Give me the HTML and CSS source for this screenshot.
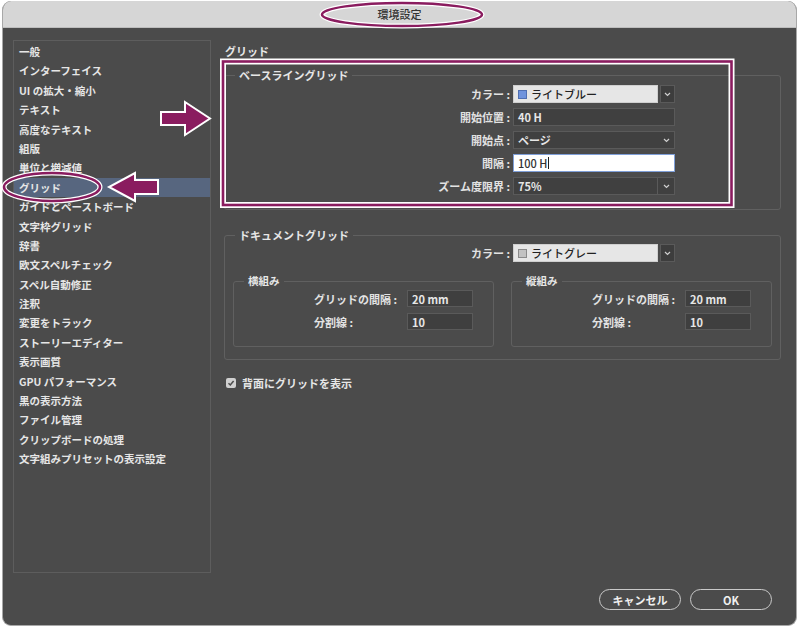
FILE: index.html
```html
<!DOCTYPE html>
<html lang="ja">
<head>
<meta charset="utf-8">
<title>環境設定</title>
<link rel="stylesheet" href="styles.css">
</head>
<body>
<div class="window">
  <div class="titlebar">環境設定</div>
  <div class="body">
    <div class="main-row">
      <nav class="sidebar">
        <div class="item">一般</div>
        <div class="item">インターフェイス</div>
        <div class="item">UI の拡大・縮小</div>
        <div class="item">テキスト</div>
        <div class="item">高度なテキスト</div>
        <div class="item">組版</div>
        <div class="item">単位と増減値</div>
        <div class="item selected">グリッド</div>
        <div class="item">ガイドとペーストボード</div>
        <div class="item">文字枠グリッド</div>
        <div class="item">辞書</div>
        <div class="item">欧文スペルチェック</div>
        <div class="item">スペル自動修正</div>
        <div class="item">注釈</div>
        <div class="item">変更をトラック</div>
        <div class="item">ストーリーエディター</div>
        <div class="item">表示画質</div>
        <div class="item">GPU パフォーマンス</div>
        <div class="item">黒の表示方法</div>
        <div class="item">ファイル管理</div>
        <div class="item">クリップボードの処理</div>
        <div class="item">文字組みプリセットの表示設定</div>
      </nav>
      <section class="content">
        <h2 class="heading">グリッド</h2>
        <fieldset class="group baseline">
          <legend>ベースライングリッド</legend>
          <div class="form">
            <div class="label">カラー :</div>
            <div class="combo">
              <div class="combo-main light"><span class="swatch blue"></span>ライトブルー</div>
              <div class="combo-btn"><svg width="7" height="5" viewBox="0 0 7 5"><path d="M1 1l2.5 2.5L6 1" fill="none" stroke="#cfcfcf" stroke-width="1.2"/></svg></div>
            </div>
            <div class="label">開始位置 :</div>
            <div class="field">40 H</div>
            <div class="label">開始点 :</div>
            <div class="field select">ページ<svg width="7" height="5" viewBox="0 0 7 5"><path d="M1 1l2.5 2.5L6 1" fill="none" stroke="#cfcfcf" stroke-width="1.2"/></svg></div>
            <div class="label">間隔 :</div>
            <div class="field focus">100 H<span class="caret"></span></div>
            <div class="label">ズーム度限界 :</div>
            <div class="field select split">75%<span class="split-btn"><svg width="7" height="5" viewBox="0 0 7 5"><path d="M1 1l2.5 2.5L6 1" fill="none" stroke="#cfcfcf" stroke-width="1.2"/></svg></span></div>
          </div>
        </fieldset>
        <fieldset class="group docgrid">
          <legend>ドキュメントグリッド</legend>
          <div class="form">
            <div class="label">カラー :</div>
            <div class="combo">
              <div class="combo-main light"><span class="swatch gray"></span>ライトグレー</div>
              <div class="combo-btn"><svg width="7" height="5" viewBox="0 0 7 5"><path d="M1 1l2.5 2.5L6 1" fill="none" stroke="#cfcfcf" stroke-width="1.2"/></svg></div>
            </div>
          </div>
          <div class="subs">
            <fieldset class="sub">
              <legend>横組み</legend>
              <div class="subform">
                <div class="sublabel">グリッドの間隔 :</div>
                <div class="field small">20 mm</div>
                <div class="sublabel">分割線 :</div>
                <div class="field small">10</div>
              </div>
            </fieldset>
            <fieldset class="sub">
              <legend>縦組み</legend>
              <div class="subform">
                <div class="sublabel">グリッドの間隔 :</div>
                <div class="field small">20 mm</div>
                <div class="sublabel">分割線 :</div>
                <div class="field small">10</div>
              </div>
            </fieldset>
          </div>
        </fieldset>
        <div class="check">
          <span class="box"><svg width="8" height="8" viewBox="0 0 8 8"><path d="M1.5 4.2l1.8 1.8L6.6 2" fill="none" stroke="#4b4b4b" stroke-width="1.5"/></svg></span>
          背面にグリッドを表示
        </div>
      </section>
    </div>
    <div class="buttons">
      <div class="btn">キャンセル</div>
      <div class="btn">OK</div>
    </div>
  </div>
</div>
<svg class="annot" width="800" height="630" viewBox="0 0 800 630">
  <g fill="none">
    <ellipse cx="402" cy="14.5" rx="80" ry="11.5" stroke="#fff" stroke-width="5"/>
    <ellipse cx="402" cy="14.5" rx="80" ry="11.5" stroke="#8a1c5f" stroke-width="2.5"/>
    <ellipse cx="52" cy="187" rx="48" ry="14" stroke="#fff" stroke-width="5"/>
    <ellipse cx="52" cy="187" rx="48" ry="14" stroke="#8a1c5f" stroke-width="2.5"/>
    <rect x="223" y="61.5" width="508.5" height="143.5" stroke="#fff" stroke-width="6"/>
    <rect x="223" y="61.5" width="508.5" height="143.5" stroke="#8a1c5f" stroke-width="2.6"/>
  </g>
  <polygon points="161,112 185,112 185,102 210,118.5 185,135 185,125 161,125" fill="#8a1c5f" stroke="#fff" stroke-width="2" stroke-linejoin="miter"/>
  <polygon points="158,180 135,180 135,173 109,187 135,201 135,194 158,194" fill="#8a1c5f" stroke="#fff" stroke-width="2" stroke-linejoin="miter"/>
</svg>
</body>
</html>
```
FILE: styles.css
```css
* { box-sizing: border-box; }
html, body { margin: 0; padding: 0; background: #ffffff; }
body {
  position: relative;
  width: 800px;
  height: 630px;
  font-family: "Noto Sans CJK JP", "Noto Sans", sans-serif;
  color: #e6e6e6;
}
.window {
  margin: 1px 3px 0 2px;
  width: 795px;
  height: 625px;
  background: #4b4b4b;
  border: 1px solid #a8a8a8;
  border-top: none;
  border-radius: 9px;
  overflow: hidden;
}
.titlebar {
  height: 27px;
  background: #d6d6d6;
  border-bottom: 1px solid #bdbdbd;
  text-align: center;
  line-height: 27px;
  font-size: 11px;
  color: #333;
  font-weight: 500;
}
.body { padding: 12px 0 0 10px; }
.main-row { display: flex; align-items: flex-start; height: 533px; }
.sidebar {
  width: 198px;
  height: 533px;
  border: 1px solid #5d5d5d;
  padding-top: 1px;
  flex: none;
}
.item {
  height: 19.4px;
  line-height: 19.4px;
  padding-left: 5px;
  font-size: 10.5px;
  font-weight: 700;
  color: #e6e6e6;
  white-space: nowrap;
}
.item.selected { background: #57667f; }
.content { margin-left: 13px; width: 557px; }
.heading {
  margin: 4px 0 0 1px;
  font-size: 11px;
  line-height: 14px;
  font-weight: 700;
  color: #e6e6e6;
}
fieldset {
  margin: 0;
  min-width: 0;
  border: 1px solid #606060;
  border-radius: 3px;
}
legend {
  padding: 0 4px;
  margin-left: 10px;
  font-size: 11px;
  line-height: 14px;
  font-weight: 700;
  color: #e6e6e6;
}
.baseline { margin-top: 10px; padding: 3px 0 14px 0; }
.docgrid { margin-top: 18px; padding: 2px 0 12px 0; }
.form {
  display: grid;
  grid-template-columns: 285px 162px;
  column-gap: 3px;
  row-gap: 5px;
  align-items: center;
}
.label {
  text-align: right;
  font-size: 11px;
  font-weight: 700;
  color: #e2e2e2;
  white-space: nowrap;
}
.combo { display: flex; gap: 2px; height: 18px; }
.combo-main {
  width: 145px;
  height: 18px;
  display: flex;
  align-items: center;
  gap: 4px;
  padding-left: 4px;
  font-size: 11px;
  font-weight: 500;
  color: #222;
}
.combo-main.light { background: #e6e6e6; border: 1px solid #cfcfcf; }
.swatch { width: 9px; height: 9px; border: 1px solid #7a7a7a; }
.swatch.blue { background: #6f93dd; border-color: #4f6fb2; }
.swatch.gray { background: #c2c2c2; border-color: #8a8a8a; }
.combo-btn {
  width: 15px;
  height: 18px;
  background: #3d3d3d;
  border: 1px solid #5a5a5a;
  display: flex;
  align-items: center;
  justify-content: center;
}
.field {
  height: 18px;
  background: #404040;
  border: 1px solid #5a5a5a;
  padding-left: 4px;
  font-size: 11px;
  font-weight: 700;
  color: #e6e6e6;
  display: flex;
  align-items: center;
  white-space: nowrap;
}
.field.select { justify-content: space-between; padding-right: 4px; }
.field.split { padding-right: 0; }
.split-btn {
  width: 17px;
  height: 16px;
  border-left: 1px solid #5a5a5a;
  display: flex;
  align-items: center;
  justify-content: center;
}
.field.focus {
  background: #ffffff;
  border: 1px solid #7f9fd8;
  color: #333;
  font-weight: 500;
}
.caret { display: inline-block; width: 1px; height: 12px; background: #222; margin-left: 1px; }
.subs {
  display: grid;
  grid-template-columns: 1fr 1fr;
  column-gap: 17px;
  padding: 0 8px;
  margin-top: 12px;
}
.sub { padding: 2px 0 16px 0; }
.sub legend { font-size: 10.5px; }
.subform {
  margin-left: 80px;
  display: grid;
  grid-template-columns: 90px 66px;
  column-gap: 3px;
  row-gap: 6px;
  align-items: center;
}
.sublabel {
  font-size: 11px;
  font-weight: 700;
  color: #e2e2e2;
  white-space: nowrap;
}
.field.small { height: 17px; background: #3f3f3f; }
.check {
  margin: 16px 0 0 2px;
  display: flex;
  align-items: center;
  gap: 6px;
  font-size: 11px;
  line-height: 14px;
  font-weight: 700;
  color: #e6e6e6;
}
.box {
  width: 10px;
  height: 10px;
  background: #d0d0d0;
  border-radius: 2px;
  display: flex;
  align-items: center;
  justify-content: center;
}
.buttons {
  display: flex;
  justify-content: flex-end;
  gap: 9px;
  padding-right: 24px;
  margin-top: 16px;
}
.btn {
  width: 82px;
  height: 21px;
  border: 1.5px solid #c9c9c9;
  border-radius: 11px;
  display: flex;
  align-items: center;
  justify-content: center;
  font-size: 11px;
  font-weight: 700;
  color: #f0f0f0;
}
.annot { position: absolute; left: 0; top: 0; pointer-events: none; }
```
